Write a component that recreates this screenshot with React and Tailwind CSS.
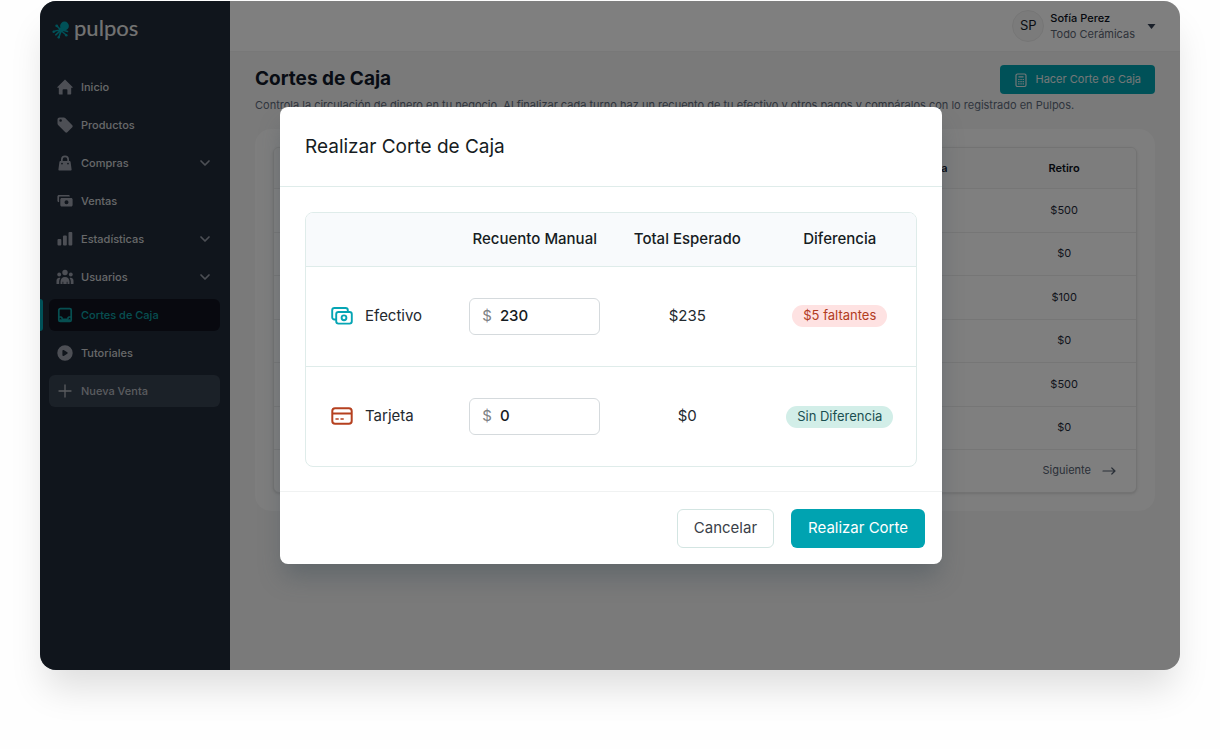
import { useState } from "react";

// ── Icons ─────────────────────────────────────────────────────────────────────
const IconHome = () => (
  <svg width="16" height="16" viewBox="0 0 16 16" fill="currentColor">
    <path d="M8 .5 15.6 8c.3.3.1.8-.3.8h-1.1v5.9c0 .4-.3.8-.8.8h-3V11a.8.8 0 0 0-.8-.8H6.4a.8.8 0 0 0-.8.8v4.500h-3a.8.8 0 0 1-.8-.8V8.800H.7C.3 8.800.1 8.300.4 8L8 .5Z" />
  </svg>
);
const IconTag = () => (
  <svg width="16" height="16" viewBox="0 0 16 16" fill="currentColor">
    <path fillRule="evenodd" d="M.5 2.500v4c0 .5.2 1 .6 1.400l7.200 7.300c.6.6 1.400.6 2 0l5-5c.5-.6.5-1.400 0-2L8.200.9C7.800.6 7.400.4 6.900.4H2.600C1.400.4.5 1.300.5 2.500Zm3.100 2.300a1.300 1.300 0 1 0 0-2.600 1.300 1.300 0 0 0 0 2.600Z" clipRule="evenodd" />
  </svg>
);
const IconBag = () => (
  <svg width="16" height="16" viewBox="0 0 16 16" fill="currentColor">
    <path fillRule="evenodd" d="M8 .5a4 4 0 0 0-4 4V6h-.6c-.5 0-.9.400-1 .9l-1 7.500c0 .6.400 1.100 1 1.100h11.200c.6 0 1-.5 1-1.100l-1-7.500c-.1-.5-.5-.9-1-.9H12V4.500a4 4 0 0 0-4-4ZM10.300 6V4.500a2.300 2.300 0 0 0-4.600 0V6h4.600ZM5 9.500a.9.9 0 1 0 0-1.800.9.9 0 0 0 0 1.800Zm6 0a.9.9 0 1 0 0-1.800.9.9 0 0 0 0 1.800Z" clipRule="evenodd" />
  </svg>
);
const IconSales = () => (
  <svg width="16" height="16" viewBox="0 0 16 16" fill="currentColor">
    <path d="M2 2h9.500c.8 0 1.400.7 1.400 1.600H2.600c-.3 0-.5.2-.5.5v5.100C1.100 9.200.4 8.600.4 7.800V3.600C.4 2.700 1.100 2 2 2Z" />
    <path fillRule="evenodd" d="M4.800 5.100h9.300c.9 0 1.500.7 1.500 1.500v5.400c0 .9-.6 1.500-1.500 1.500H4.800c-.9 0-1.500-.6-1.500-1.500V6.600c0-.8.6-1.500 1.500-1.500Zm4.700 6.200a2 2 0 1 0 0-4 2 2 0 0 0 0 4Z" clipRule="evenodd" />
  </svg>
);
const IconStats = () => (
  <svg width="16" height="16" viewBox="0 0 16 16" fill="currentColor">
    <rect x=".5" y="8" width="3.800" height="6.500" rx="1" />
    <rect x="6" y="4.500" width="3.800" height="10" rx="1" />
    <rect x="11.500" y="1" width="3.800" height="13.500" rx="1" />
  </svg>
);
const IconUsers = () => (
  <svg width="18" height="16" viewBox="0 0 18 16" fill="currentColor">
    <circle cx="9" cy="3.500" r="2.700" />
    <circle cx="3.200" cy="5.500" r="1.900" />
    <circle cx="14.800" cy="5.500" r="1.900" />
    <path d="M4.500 15v-2.500C4.500 9.900 6.300 8 9 8s4.500 1.900 4.500 4.500V15h-2V12.800h-.8V15H7.300v-2.200h-.8V15h-2Z" />
    <path d="M.5 15v-3.200c0-1.800 1-3.100 2.700-3.100.5 0 .9.1 1.200.3-.8 1-1.200 2.200-1.200 3.500V15H.5ZM17.500 15v-3.200c0-1.800-1-3.100-2.700-3.100-.5 0-.9.1-1.200.3.8 1 1.200 2.200 1.200 3.500V15h2.700Z" />
  </svg>
);
const IconDrawer = () => (
  <svg width="16" height="16" viewBox="0 0 16 16" fill="none" stroke="currentColor" strokeWidth="1.700" strokeLinejoin="round">
    <rect x="1.800" y="1.600" width="12.400" height="12.800" rx="1.500" />
    <path d="M2 10h1.800c.5 0 .8.3 1 .7l.4.9c.2.4.500.7 1 .7h3.600c.5 0 .8-.3 1-.7l.4-.9c.2-.4.500-.7 1-.7H14" />
    <path d="M2.500 13.300h11" strokeWidth="2" />
  </svg>
);
const IconPlay = () => (
  <svg width="16" height="16" viewBox="0 0 16 16" fill="currentColor">
    <path fillRule="evenodd" d="M8 15.700A7.700 7.700 0 1 0 8 .3a7.700 7.700 0 0 0 0 15.400ZM6.700 5.100c-.6-.4-1.300 0-1.300.7v4.400c0 .7.700 1.100 1.300.7l3.600-2.200c.5-.3.5-1.100 0-1.400L6.700 5.100Z" clipRule="evenodd" />
  </svg>
);
const IconPlus = () => (
  <svg width="16" height="16" viewBox="0 0 16 16" fill="none" stroke="currentColor" strokeWidth="1.300" strokeLinecap="round">
    <path d="M8 2v12M2 8h12" />
  </svg>
);
const IconChevron = () => (
  <svg width="12" height="12" viewBox="0 0 12 12" fill="none" stroke="currentColor" strokeWidth="1.700" strokeLinecap="round" strokeLinejoin="round">
    <path d="m2 4 4 4 4-4" />
  </svg>
);
const IconCalculator = () => (
  <svg width="14" height="16" viewBox="0 0 14 16" fill="none" stroke="currentColor" strokeWidth="1.200">
    <rect x="2" y="2" width="10" height="12.500" rx="1.500" />
    <path d="M4.500 4.800h5" />
    <path d="M4.200 7.500h1.300M6.400 7.500h1.300M8.600 7.500h1.300M4.200 9.700h1.300M6.400 9.700h1.300M8.600 9.700h1.300M4.200 11.900h1.300M6.400 11.900h1.300M8.600 11.900h1.300" />
  </svg>
);
const IconArrow = () => (
  <svg width="14" height="10" viewBox="0 0 14 10" fill="none" stroke="currentColor" strokeWidth="1.200" strokeLinecap="round" strokeLinejoin="round">
    <path d="M1 5h12M9.800 2 13 5 9.800 8" />
  </svg>
);
const IconCash = () => (
  <svg width="22" height="18" viewBox="0 0 22 18" fill="none" stroke="currentColor" strokeWidth="1.900" strokeLinejoin="round" strokeLinecap="round">
    <path d="M4.800 12.500H3.500a2.300 2.300 0 0 1-2.300-2.300V3.300A2.300 2.300 0 0 1 3.500 1h11a2.300 2.300 0 0 1 2.300 2.300V5" />
    <rect x="5.200" y="5" width="15.600" height="11.600" rx="2.300" />
    <circle cx="13" cy="10.800" r="2.400" />
  </svg>
);
const IconCard = () => (
  <svg width="22" height="18" viewBox="0 0 22 18" fill="none" stroke="currentColor" strokeWidth="2">
    <rect x="1.300" y="1.200" width="19.400" height="15.600" rx="2.800" />
    <path d="M1.500 6.500h19" />
    <path d="M5 12h2.200M10 12h2.200" strokeLinecap="round" strokeWidth="1.500" />
  </svg>
);
const Octopus = () => (
  <svg width="18" height="18" viewBox="0 0 18 18" fill="none" stroke="currentColor" strokeWidth="1.600" strokeLinecap="round" className="text-[#00a3b1]">
    <circle cx="12.500" cy="5" r="4.400" fill="currentColor" stroke="none" />
    <path d="M10.500 7.500 8.800 9.200" strokeWidth="4" />
    <path d="M8.500 8.800 5 5M8 9.300Q5 9 1.500 10.800M8 10 3.800 13.800M9 10.500Q7.800 13 6.800 16.500M9.500 10l4.700 4M10.500 9l5 1.500" />
    <circle cx="4.700" cy="4.800" r="1.400" fill="currentColor" stroke="none" />
    <circle cx="1.700" cy="10.700" r="1.200" fill="currentColor" stroke="none" />
    <circle cx="14.300" cy="14.200" r="1.300" fill="currentColor" stroke="none" />
    <circle cx="6.700" cy="16.300" r="1.200" fill="currentColor" stroke="none" />
  </svg>
);

const NAV = [
  { label: "Inicio", icon: IconHome },
  { label: "Productos", icon: IconTag },
  { label: "Compras", icon: IconBag, expandable: true },
  { label: "Ventas", icon: IconSales },
  { label: "Estadísticas", icon: IconStats, expandable: true },
  { label: "Usuarios", icon: IconUsers, expandable: true },
  { label: "Cortes de Caja", icon: IconDrawer, active: true },
  { label: "Tutoriales", icon: IconPlay },
];

const WITHDRAWALS = ["$500", "$0", "$100", "$0", "$500", "$0"];

// ── Sidebar ───────────────────────────────────────────────────────────────────
function Sidebar() {
  return (
    <aside className="w-[190px] shrink-0 bg-[#202a38] text-[11px] font-medium text-[#cfd1d4]">
      <a href="#inicio" className="flex h-[58px] items-center gap-1 pl-3">
        <Octopus />
        <span className="pb-1 font-['Lato'] text-[22px] leading-6 font-medium text-[#e4e4e4]">pulpos</span>
      </a>
      <nav className="mt-3 flex flex-col gap-1.5">
        {NAV.map(({ label, icon: Icon, expandable, active }) => (
          <div key={label} className={`flex pr-2.5 ${active ? "gap-1.5" : "pl-[9px]"}`}>
            {active && <span className="w-[3px] rounded-r-sm bg-[#00a3b1]" />}
            <a
              href="#"
              aria-current={active ? "page" : undefined}
              className={`flex h-8 flex-1 items-center rounded-md pr-[9px] pl-[7px] ${active ? "bg-[#10131f] text-[#0f9fa3]" : ""}`}
            >
              <span className={`flex w-[18px] justify-center ${active ? "" : "text-[#9a9fab]"}`}>
                <Icon />
              </span>
              <span className="ml-[7px] flex-1">{label}</span>
              {expandable && <span className="text-[#9a9fab]"><IconChevron /></span>}
            </a>
          </div>
        ))}
        <div className="flex pr-2.5 pl-[9px]">
          <button type="button" className="flex h-8 flex-1 items-center rounded-md bg-[#374250] pl-[7px] text-left text-[#b4b8bf]">
            <span className="flex w-[18px] justify-center"><IconPlus /></span>
            <span className="ml-[7px]">Nueva Venta</span>
          </button>
        </div>
      </nav>
    </aside>
  );
}

// ── Top bar ───────────────────────────────────────────────────────────────────
function TopBar() {
  return (
    <header className="flex h-[51px] items-center justify-end border-b border-[#f0f0f0] bg-white pr-6">
      <button type="button" className="flex items-center text-left">
        <span className="flex size-8 items-center justify-center rounded-full border border-[#ececec] bg-[#f6f6f6] text-[13px] text-[#111827]">
          SP
        </span>
        <span className="ml-1.5 text-[11px] leading-4">
          <span className="block font-medium text-[#0b1020]">Sofía Perez</span>
          <span className="block text-[#5d6673]">Todo Cerámicas</span>
        </span>
        <svg width="9" height="5" viewBox="0 0 8 5" className="ml-3" fill="#323f52">
          <path d="M0 0h8L4 5Z" />
        </svg>
      </button>
    </header>
  );
}

// ── Page content ──────────────────────────────────────────────────────────────
function CutsPage() {
  return (
    <main className="px-[25px] pt-[13px]">
      <div className="flex items-start justify-between">
        <h1 className="text-[19px] leading-[27px] font-bold text-[#101828]">Cortes de Caja</h1>
        <button type="button" className="flex h-[29px] items-center gap-[7px] rounded bg-[#00a3b1] px-3.5 text-[11px] text-[#e8eeee]">
          <IconCalculator />
          Hacer Corte de Caja
        </button>
      </div>
      <p className="mt-px text-[11px] leading-5 whitespace-nowrap text-[#5f6b7c]">
        Controla la circulación de dinero en tu negocio. Al finalizar cada turno haz un recuento de tu efectivo y otros pagos y compáralos con lo registrado en Pulpos.
      </p>

      <section className="mt-3.5 rounded-2xl bg-[#fcfcfc] p-[18px]">
        <div className="overflow-hidden rounded-md border border-[#e6e6e6] bg-white shadow-sm">
          <table className="w-full table-fixed text-center text-[11px] text-[#1f2a3a]">
            <thead className="bg-[#fafafa] text-[#0b1020]">
              <tr className="h-10 border-b border-[#ececec]">
                <td colSpan="4" />
                <th scope="col" className="font-semibold">Diferencia</th>
                <th scope="col" className="font-semibold">Retiro</th>
              </tr>
            </thead>
            <tbody>
              {WITHDRAWALS.map((amount, i) => (
                <tr key={i} className="border-b border-[#ececec] odd:h-11 even:h-[43px]">
                  <td colSpan="5" />
                  <td>{amount}</td>
                </tr>
              ))}
            </tbody>
          </table>
          <div className="flex h-[42px] items-center justify-end pr-5">
            <button type="button" className="flex items-center gap-[11px] text-[11px] text-[#556070]">
              Siguiente
              <IconArrow />
            </button>
          </div>
        </div>
      </section>
    </main>
  );
}

// ── Dialog ────────────────────────────────────────────────────────────────────
function CountRow({ id, label, icon, iconClass, value, onChange, expected, badge, badgeClass, last }) {
  return (
    <tr className={`h-[100px] ${last ? "" : "border-b border-[#dfecea]"}`}>
      <th scope="row" className="pl-[25px] text-left font-normal">
        <label htmlFor={id} className="flex items-center gap-3">
          <span className={iconClass}>{icon}</span>
          {label}
        </label>
      </th>
      <td>
        <div className="mx-auto flex h-[37px] w-[131px] items-center gap-2 rounded-md border border-[#d5dadd] px-3">
          <span className="text-[#7d8285]">$</span>
          <input
            id={id}
            type="text"
            inputMode="decimal"
            value={value}
            onChange={(e) => onChange(e.target.value)}
            className="w-full min-w-0 font-medium text-[#161c22] outline-none"
          />
        </div>
      </td>
      <td>{expected}</td>
      <td>
        <span className={`inline-block h-[22px] rounded-full px-[11px] align-middle text-[13px] leading-5 ${badgeClass}`}>{badge}</span>
      </td>
    </tr>
  );
}

function CutDialog() {
  const [cash, setCash] = useState("230");
  const [card, setCard] = useState("0");

  return (
    <div role="dialog" aria-modal="true" aria-labelledby="dialog-title" className="w-full rounded-lg bg-white shadow-[0_16px_24px_-4px_rgba(60,75,85,0.4)]">
      <h2 id="dialog-title" className="flex h-20 items-center border-b border-[#dfecea] px-[25px] pt-0.5 text-[19px] font-normal text-[#161c22]">
        Realizar Corte de Caja
      </h2>

      <div className="p-[25px] pb-6">
        <div className="overflow-hidden rounded-lg border border-[#dfecea]">
          <table className="w-full table-fixed text-center text-[15px] text-[#23292f]">
            <thead className="bg-[#f8fafc] text-[#161c22]">
              <tr className="h-[53px] border-b border-[#dfecea]">
                <td />
                <th scope="col" className="font-medium">Recuento Manual</th>
                <th scope="col" className="font-medium">Total Esperado</th>
                <th scope="col" className="font-medium">Diferencia</th>
              </tr>
            </thead>
            <tbody>
              <CountRow
                id="cash"
                label="Efectivo"
                icon={<IconCash />}
                iconClass="text-[#06a5b4]"
                value={cash}
                onChange={setCash}
                expected="$235"
                badge="$5 faltantes"
                badgeClass="bg-[#fee2e2] text-[#b23c1e]"
              />
              <CountRow
                id="card"
                label="Tarjeta"
                icon={<IconCard />}
                iconClass="text-[#b5401f]"
                value={card}
                onChange={setCard}
                expected="$0"
                badge="Sin Diferencia"
                badgeClass="bg-[#d2eee8] text-[#1a4f50]"
                last
              />
            </tbody>
          </table>
        </div>
      </div>

      <div className="flex justify-end gap-[17px] border-t border-[#f0f2f2] px-[17px] pt-[17px] pb-4 text-[15px]">
        <button type="button" className="h-[39px] rounded-md border border-[#d3e5e2] px-4 text-[#3a4148]">Cancelar</button>
        <button type="button" className="h-[39px] rounded-md bg-[#00a3b1] px-[17px] text-white">Realizar Corte</button>
      </div>
    </div>
  );
}

export default function App() {
  return (
    <div className="min-h-screen bg-[#fefefe] px-10 pt-px pb-[79px] font-['Inter',sans-serif]">
      <div className="relative flex min-h-[669px] overflow-hidden rounded-2xl shadow-[0_24px_36px_-6px_rgba(0,0,0,0.13)]">
        <Sidebar />
        <div className="min-w-0 flex-1 bg-[#f4f4f4]">
          <TopBar />
          <CutsPage />
        </div>
        <div className="absolute inset-0 bg-black/50 pt-[106px] pr-[238px] pl-60">
          <CutDialog />
        </div>
      </div>
    </div>
  );
}
